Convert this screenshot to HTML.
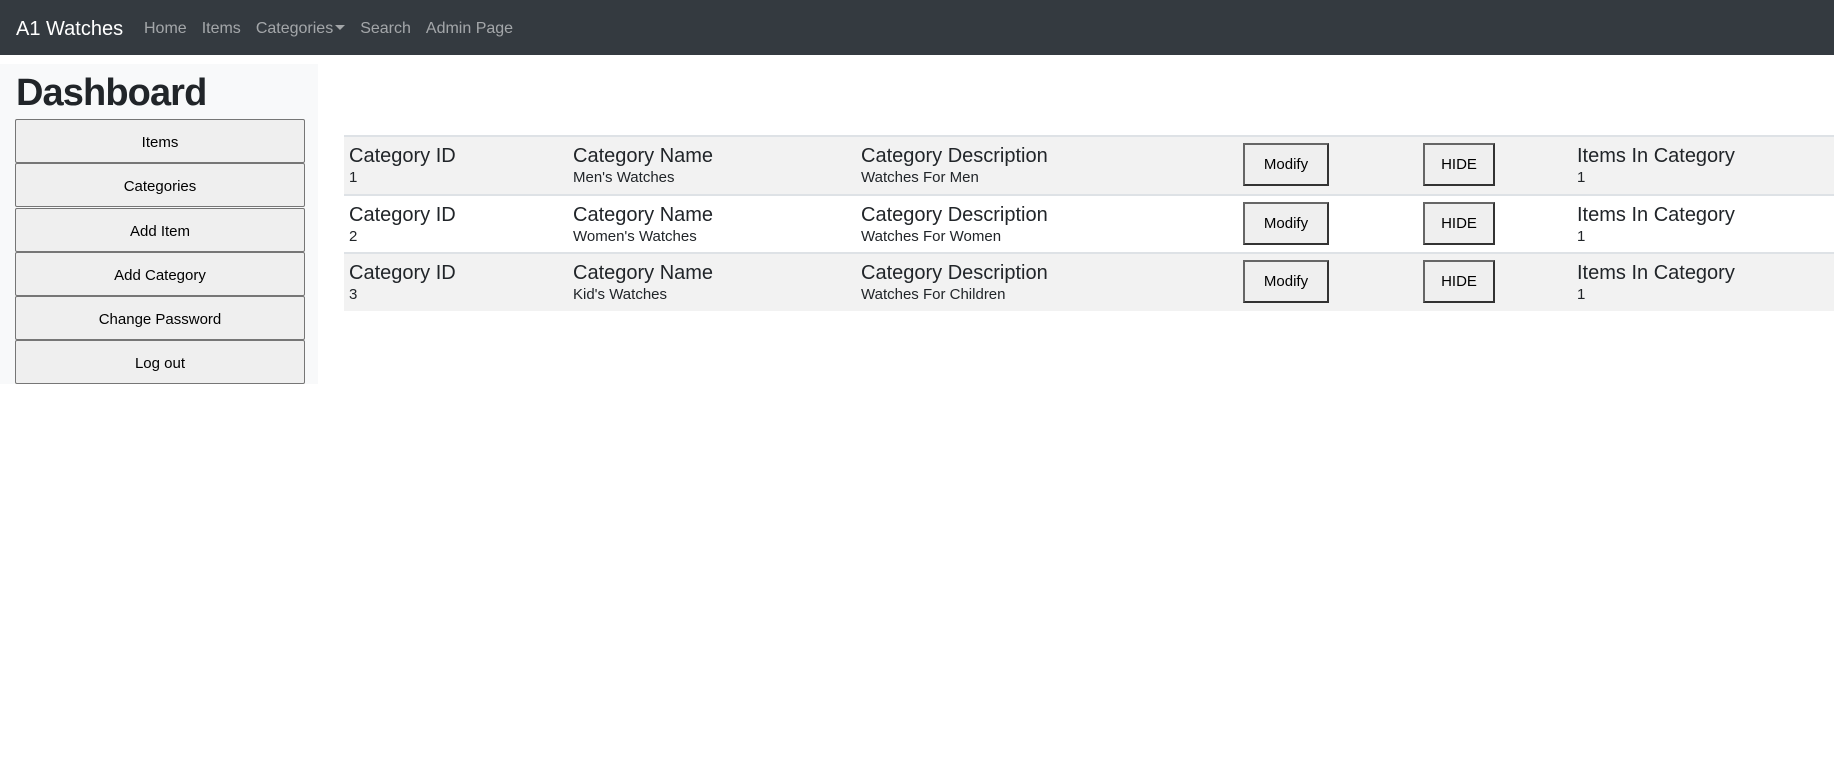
<!DOCTYPE html>
<html><head><meta charset="utf-8"><style>
*{box-sizing:border-box;margin:0;padding:0}
body{width:1834px;height:782px;background:#fff;font-family:"Liberation Sans",sans-serif;color:#212529;position:relative;overflow:hidden}
.nav{position:absolute;left:0;top:0;width:1834px;height:55px;background:#343a40}
.brand{position:absolute;left:16px;top:18px;font-size:20px;color:#fff}
.links{position:absolute;left:144px;top:20px;font-size:16px;color:rgba(255,255,255,.55)}
.links span{margin-right:15px}
.caret{display:inline-block;border-top:5px solid rgba(255,255,255,.55);border-left:5px solid transparent;border-right:5px solid transparent;vertical-align:3px;margin-left:2px}
.side{position:absolute;left:0;top:64px;width:318px;height:320px;background:#f8f9fa}
h1{position:absolute;left:16px;top:69px;font-size:38px;font-weight:bold;line-height:48px;letter-spacing:-0.9px}
.btn{position:absolute;left:15px;width:290px;height:44px;background:#efefef;border:1px solid #767676;border-radius:2px;font-size:15px;text-align:center;line-height:46px;color:#000}
.row{position:absolute;left:344px;width:1490px;height:59px;border-top:2px solid #dee2e6}
.row.s{background:#f2f2f2}
.c{position:absolute;top:7px}
.h{font-size:20px;font-weight:500;line-height:24px}
.v{font-size:15px;line-height:20px}
.b{position:absolute;top:6px;height:43px;background:#efefef;border:2px solid #333;border-top-color:#666;border-left-color:#666;font-size:15px;text-align:center;line-height:39px;color:#000}
</style></head><body>
<div class="nav"><div class="brand">A1 Watches</div>
<div class="links"><span>Home</span><span>Items</span><span>Categories<i class="caret"></i></span><span>Search</span><span>Admin Page</span></div></div>
<div class="side"></div>
<h1>Dashboard</h1>
<div class="btn" style="top:119px">Items</div>
<div class="btn" style="top:163px">Categories</div>
<div class="btn" style="top:208px">Add Item</div>
<div class="btn" style="top:252px">Add Category</div>
<div class="btn" style="top:296px">Change Password</div>
<div class="btn" style="top:340px">Log out</div>

<div class="row s" style="top:135px">
<div class="c" style="left:5px"><div class="h">Category ID</div><div class="v">1</div></div>
<div class="c" style="left:229px"><div class="h">Category Name</div><div class="v">Men's Watches</div></div>
<div class="c" style="left:517px"><div class="h">Category Description</div><div class="v">Watches For Men</div></div>
<div class="b" style="left:899px;width:86px">Modify</div>
<div class="b" style="left:1079px;width:72px">HIDE</div>
<div class="c" style="left:1233px"><div class="h">Items In Category</div><div class="v">1</div></div>
</div>
<div class="row" style="top:194px">
<div class="c" style="left:5px"><div class="h">Category ID</div><div class="v">2</div></div>
<div class="c" style="left:229px"><div class="h">Category Name</div><div class="v">Women's Watches</div></div>
<div class="c" style="left:517px"><div class="h">Category Description</div><div class="v">Watches For Women</div></div>
<div class="b" style="left:899px;width:86px">Modify</div>
<div class="b" style="left:1079px;width:72px">HIDE</div>
<div class="c" style="left:1233px"><div class="h">Items In Category</div><div class="v">1</div></div>
</div>
<div class="row s" style="top:252px">
<div class="c" style="left:5px"><div class="h">Category ID</div><div class="v">3</div></div>
<div class="c" style="left:229px"><div class="h">Category Name</div><div class="v">Kid's Watches</div></div>
<div class="c" style="left:517px"><div class="h">Category Description</div><div class="v">Watches For Children</div></div>
<div class="b" style="left:899px;width:86px">Modify</div>
<div class="b" style="left:1079px;width:72px">HIDE</div>
<div class="c" style="left:1233px"><div class="h">Items In Category</div><div class="v">1</div></div>
</div>
</body></html>
